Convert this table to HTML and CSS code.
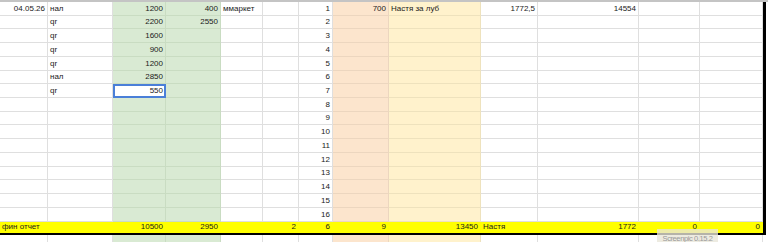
FILE: index.html
```html
<!DOCTYPE html>
<html lang="ru">
<head>
<meta charset="utf-8">
<title>Sheet</title>
<link rel="stylesheet" href="styles.css">
</head>
<body>
<div class="topbar"></div>
<div class="frame">
  <div class="row"><div class="r">04.05.26</div><div>нал</div><div class="r">1200</div><div class="r">400</div><div>ммаркет</div><div></div><div class="r">1</div><div class="r">700</div><div>Настя за луб</div><div class="r">1772,5</div><div class="r">14554</div><div></div><div></div></div>
  <div class="row"><div></div><div>qr</div><div class="r">2200</div><div class="r">2550</div><div></div><div></div><div class="r">2</div><div></div><div></div><div></div><div></div><div></div><div></div></div>
  <div class="row"><div></div><div>qr</div><div class="r">1600</div><div></div><div></div><div></div><div class="r">3</div><div></div><div></div><div></div><div></div><div></div><div></div></div>
  <div class="row"><div></div><div>qr</div><div class="r">900</div><div></div><div></div><div></div><div class="r">4</div><div></div><div></div><div></div><div></div><div></div><div></div></div>
  <div class="row"><div></div><div>qr</div><div class="r">1200</div><div></div><div></div><div></div><div class="r">5</div><div></div><div></div><div></div><div></div><div></div><div></div></div>
  <div class="row"><div></div><div>нал</div><div class="r">2850</div><div></div><div></div><div></div><div class="r">6</div><div></div><div></div><div></div><div></div><div></div><div></div></div>
  <div class="row"><div></div><div>qr</div><div class="r sel">550</div><div></div><div></div><div></div><div class="r">7</div><div></div><div></div><div></div><div></div><div></div><div></div></div>
  <div class="row"><div></div><div></div><div></div><div></div><div></div><div></div><div class="r">8</div><div></div><div></div><div></div><div></div><div></div><div></div></div>
  <div class="row"><div></div><div></div><div></div><div></div><div></div><div></div><div class="r">9</div><div></div><div></div><div></div><div></div><div></div><div></div></div>
  <div class="row"><div></div><div></div><div></div><div></div><div></div><div></div><div class="r">10</div><div></div><div></div><div></div><div></div><div></div><div></div></div>
  <div class="row"><div></div><div></div><div></div><div></div><div></div><div></div><div class="r">11</div><div></div><div></div><div></div><div></div><div></div><div></div></div>
  <div class="row"><div></div><div></div><div></div><div></div><div></div><div></div><div class="r">12</div><div></div><div></div><div></div><div></div><div></div><div></div></div>
  <div class="row"><div></div><div></div><div></div><div></div><div></div><div></div><div class="r">13</div><div></div><div></div><div></div><div></div><div></div><div></div></div>
  <div class="row"><div></div><div></div><div></div><div></div><div></div><div></div><div class="r">14</div><div></div><div></div><div></div><div></div><div></div><div></div></div>
  <div class="row"><div></div><div></div><div></div><div></div><div></div><div></div><div class="r">15</div><div></div><div></div><div></div><div></div><div></div><div></div></div>
  <div class="row"><div></div><div></div><div></div><div></div><div></div><div></div><div class="r">16</div><div></div><div></div><div></div><div></div><div></div><div></div></div>
  <div class="row total"><div>фин отчет</div><div></div><div class="r">10500</div><div class="r">2950</div><div></div><div class="r">2</div><div class="r">6</div><div class="r">9</div><div class="r">13450</div><div>Настя</div><div class="r">1772</div><div class="r">0</div><div class="r">0</div></div>
</div>
<div class="row tail"><div></div><div></div><div></div><div></div><div></div><div></div><div></div><div></div><div></div><div></div><div></div><div></div><div></div></div>
<div class="watermark">Screenpic 0.15.2</div>
</body>
</html>
```
FILE: styles.css
```css
html, body {
  margin: 0;
  padding: 0;
  background: #ffffff;
  overflow: hidden;
}
body {
  width: 768px;
  height: 242px;
  position: relative;
  font-family: "Liberation Sans", Arial, sans-serif;
  font-size: 8px;
  color: #1a1a1a;
}
.topbar {
  height: 2px;
  background: #c4c4c4;
}
.frame {
  width: 766px;
  box-sizing: border-box;
  border-right: 3px solid #000;
  border-bottom: 2px solid #000;
}
.row {
  display: grid;
  grid-template-columns: 48px 65px 53px 55px 42px 36px 34px 56px 92px 57px 101px 61px 63px;
  height: 13.733px;
}
.row > div {
  box-sizing: border-box;
  border-right: 1px solid #dfdfdf;
  border-bottom: 1px solid #dfdfdf;
  display: flex;
  align-items: flex-end;
  padding: 0 2px 1px 2px;
  line-height: 10px;
  white-space: nowrap;
  overflow: visible;
}
.row > div:nth-child(3),
.row > div:nth-child(4) {
  background: #d9ead3;
  border-color: #c9dcc2;
}
.row > div:nth-child(8) {
  background: #fce5cd;
  border-color: #ecd6bf;
}
.row > div:nth-child(9) {
  background: #fff2cc;
  border-color: #eee2bd;
}
.row > div.r {
  justify-content: flex-end;
}
.row > div.sel {
  background: #ffffff;
  border: 2px solid #4a7fd8;
  padding: 0 1px 0 1px;
}
.row.total {
  height: 11.733px;
}
.row.total > div,
.row.total > div:nth-child(n) {
  background: #ffff00;
  border-color: transparent;
  padding-bottom: 0;
}
.tail {
  width: 763px;
}
.watermark {
  position: absolute;
  left: 657px;
  top: 229px;
  width: 61px;
  height: 16px;
  background: rgba(232, 230, 216, 0.78);
  color: #999999;
  font-size: 7.5px;
  letter-spacing: -0.4px;
  text-align: center;
  line-height: 9px;
  padding-top: 5px;
  box-sizing: border-box;
}
```
